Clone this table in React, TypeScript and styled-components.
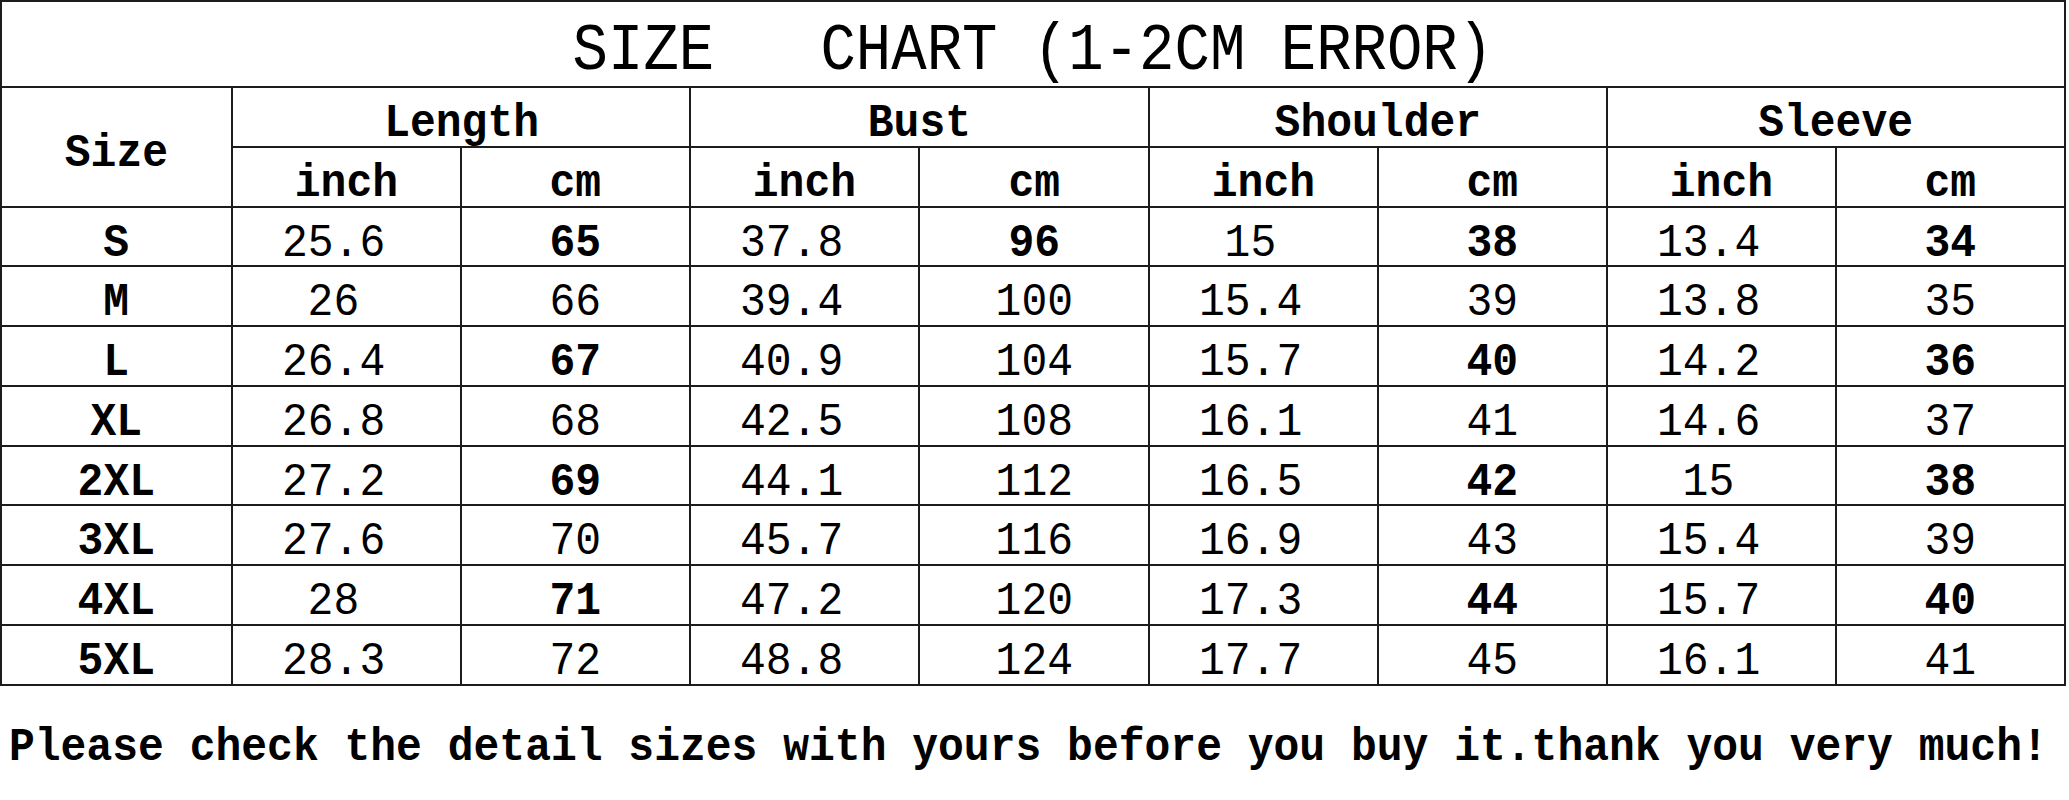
import React from 'react';
import styled, { createGlobalStyle } from 'styled-components';

const Global = createGlobalStyle`
  html, body { margin: 0; padding: 0; background: #fff; overflow: hidden; }
  body { font-family: "Liberation Mono", "DejaVu Sans Mono", monospace; color: #000; }
`;

const Page = styled.div`
  width: 2069px;
  height: 800px;
  display: flex;
  flex-direction: column;
  overflow: hidden;
  background: #fff;
`;

const Table = styled.table`
  width: 2066px;
  border-collapse: collapse;
  table-layout: fixed;
`;

const Row = styled.tr<{ $h: number }>`
  height: ${(p) => p.$h}px;
`;

const Cell = styled.td<{ $pad?: number }>`
  border: 2px solid #1c1c1c;
  padding: ${(p) => p.$pad ?? 16}px 0 0 0;
  text-align: center;
  vertical-align: top;
  white-space: nowrap;
`;

const Txt = styled.span<{ $size: number; $lh: number; $bold?: boolean; $sx: number; $origin?: string }>`
  display: inline-block;
  font-family: "Liberation Mono", "DejaVu Sans Mono", monospace;
  font-size: ${(p) => p.$size}px;
  line-height: ${(p) => p.$lh}px;
  font-weight: ${(p) => (p.$bold ? 700 : 400)};
  transform: scaleX(${(p) => p.$sx});
  transform-origin: ${(p) => p.$origin || 'center'};
  white-space: pre;
`;

const Note = styled.div`
  padding: 38px 0 0 9px;
  white-space: nowrap;
`;

const BODY = 47;
const LH = 40;
const SX = 0.915;
const TITLE = 66;
const TSX = 0.894;

type V = [string, boolean?];
type R = { size: string; vals: V[] };

const rows: R[] = [
  { size: 'S', vals: [['25.6'], ['65', true], ['37.8'], ['96', true], ['15'], ['38', true], ['13.4'], ['34', true]] },
  { size: 'M', vals: [['26'], ['66'], ['39.4'], ['100'], ['15.4'], ['39'], ['13.8'], ['35']] },
  { size: 'L', vals: [['26.4'], ['67', true], ['40.9'], ['104'], ['15.7'], ['40', true], ['14.2'], ['36', true]] },
  { size: 'XL', vals: [['26.8'], ['68'], ['42.5'], ['108'], ['16.1'], ['41'], ['14.6'], ['37']] },
  { size: '2XL', vals: [['27.2'], ['69', true], ['44.1'], ['112'], ['16.5'], ['42', true], ['15'], ['38', true]] },
  { size: '3XL', vals: [['27.6'], ['70'], ['45.7'], ['116'], ['16.9'], ['43'], ['15.4'], ['39']] },
  { size: '4XL', vals: [['28'], ['71', true], ['47.2'], ['120'], ['17.3'], ['44', true], ['15.7'], ['40', true]] },
  { size: '5XL', vals: [['28.3'], ['72'], ['48.8'], ['124'], ['17.7'], ['45'], ['16.1'], ['41']] },
];

const groups = ['Length', 'Bust', 'Shoulder', 'Sleeve'];

export default function App() {
  return (
    <Page>
      <Global />
      <Table>
        <colgroup>
          <col style={{ width: 231 }} />
          {Array.from({ length: 8 }).map((_, i) => (
            <col key={i} />
          ))}
        </colgroup>
        <tbody>
          <Row $h={86}>
            <Cell colSpan={9} $pad={17}>
              <Txt $size={TITLE} $lh={66} $sx={TSX}>{'SIZE   CHART (1-2CM ERROR)'}</Txt>
            </Cell>
          </Row>
          <Row $h={60}>
            <Cell rowSpan={2} $pad={46}>
              <Txt $size={BODY} $lh={LH} $sx={SX} $bold>Size</Txt>
            </Cell>
            {groups.map((g) => (
              <Cell key={g} colSpan={2}>
                <Txt $size={BODY} $lh={LH} $sx={SX} $bold>{g}</Txt>
              </Cell>
            ))}
          </Row>
          <Row $h={59.5}>
            {groups.map((g) => (
              <React.Fragment key={g}>
                <Cell>
                  <Txt $size={BODY} $lh={LH} $sx={SX} $bold>inch</Txt>
                </Cell>
                <Cell>
                  <Txt $size={BODY} $lh={LH} $sx={SX} $bold>cm</Txt>
                </Cell>
              </React.Fragment>
            ))}
          </Row>
          {rows.map((r) => (
            <Row $h={59.8} key={r.size}>
              <Cell>
                <Txt $size={BODY} $lh={LH} $sx={SX} $bold>{r.size}</Txt>
              </Cell>
              {r.vals.map(([v, b], i) => (
                <Cell key={i}>
                  <Txt $size={BODY} $lh={LH} $sx={SX} $bold={!!b}>{i % 2 === 0 ? v + ' ' : v}</Txt>
                </Cell>
              ))}
            </Row>
          ))}
        </tbody>
      </Table>
      <Note>
        <Txt $size={BODY} $lh={47} $sx={SX} $bold $origin="left">
          Please check the detail sizes with yours before you buy it.thank you very much!
        </Txt>
      </Note>
    </Page>
  );
}
